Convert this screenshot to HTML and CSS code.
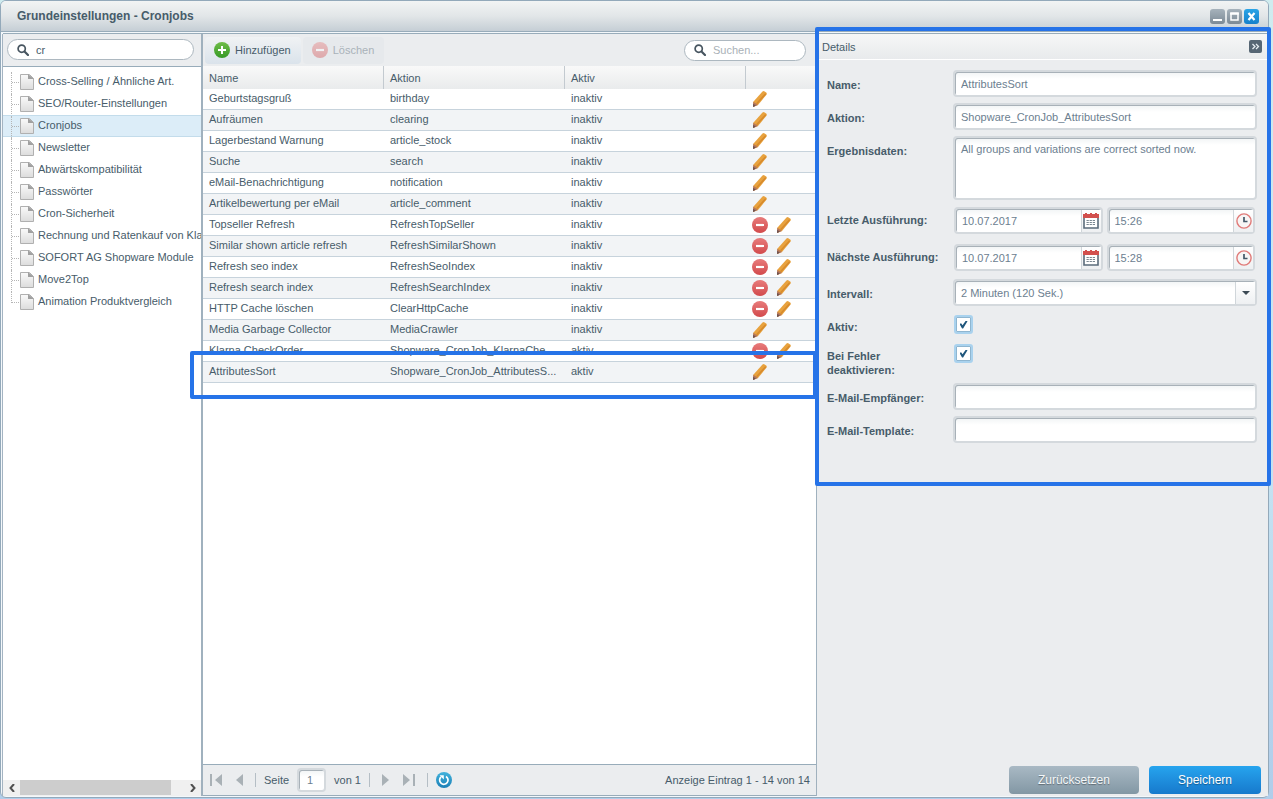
FILE: index.html
```html
<!DOCTYPE html>
<html lang="de">
<head>
<meta charset="utf-8">
<title>Grundeinstellungen - Cronjobs</title>
<link rel="stylesheet" href="styles.css">
</head>
<body>
<svg class="defs" aria-hidden="true">
  <defs>
    <linearGradient id="g-page" x1="0" y1="0" x2="0" y2="1"><stop offset="0" stop-color="#fafafa"/><stop offset="1" stop-color="#dcdcdc"/></linearGradient>
    <linearGradient id="g-red" x1="0" y1="0" x2="0" y2="1"><stop offset="0" stop-color="#e87c7c"/><stop offset="1" stop-color="#d24a4c"/></linearGradient>
    <linearGradient id="g-green" x1="0" y1="0" x2="0" y2="1"><stop offset="0" stop-color="#6fbd4a"/><stop offset="1" stop-color="#369a25"/></linearGradient>
    <linearGradient id="g-blue" x1="0" y1="0" x2="0" y2="1"><stop offset="0" stop-color="#43b3dc"/><stop offset="1" stop-color="#1b7fb6"/></linearGradient>
  </defs>
  <symbol id="page" viewBox="0 0 14 16"><path d="M.5.5h9l4 4v11H.5z" fill="url(#g-page)" stroke="#b0b0b0"/><path d="M8 0l6 5H8z" fill="#a0a0a0"/></symbol>
  <symbol id="search" viewBox="0 0 12 12"><circle cx="4.700" cy="4.700" r="3.600" fill="none" stroke="#475560" stroke-width="1.700"/><path d="M7.500 7.500L11 11" stroke="#475560" stroke-width="2.200" stroke-linecap="round"/></symbol>
  <symbol id="plus" viewBox="0 0 16 16"><circle cx="8" cy="8" r="8" fill="url(#g-green)"/><path d="M8 4v8M4 8h8" stroke="#fff" stroke-width="2"/></symbol>
  <symbol id="minus" viewBox="0 0 16 16"><circle cx="8" cy="8" r="8" fill="url(#g-red)"/><path d="M4 8h8" stroke="#fff" stroke-width="2.200"/></symbol>
  <symbol id="pencil" viewBox="0 0 16 16"><path d="M1 16l.3-5.200L10.500.6q1-1 2.100-.2l1.600 1.200q1.100.9.200 2.100L6 14z" fill="#e8a23e"/><path d="M4.600 12.800L13.700 2.700" stroke="#d68a2c" stroke-width="1.500"/><path d="M1 16l.3-5.200L6 14z" fill="#b5765a"/><path d="M1 16l.2-3.200 2.600 2z" fill="#6b5252"/></symbol>
  <symbol id="calendar" viewBox="0 0 16 16"><path d="M1 3v12h14V3" fill="#fff" stroke="#5b6c7b" stroke-width="1.600"/><path d="M0 1h2V0h2v1h3V0h2v1h3V0h2v1h2v4H0z" fill="#d2504e"/><path d="M3.500 7.500h9M3.500 9.500h9M3.500 11.500h9" stroke="#7a8791" stroke-width="1.200" stroke-dasharray="2.300 .8"/></symbol>
  <symbol id="clock" viewBox="0 0 16 16"><circle cx="8" cy="8" r="7.100" fill="#f7f5f5" stroke="#e07a78" stroke-width="1.400"/><path d="M8 4v4.500h3.500" fill="none" stroke="#435767" stroke-width="1.700"/></symbol>
  <symbol id="reload" viewBox="0 0 16 16"><circle cx="8" cy="8" r="8" fill="url(#g-blue)"/><path d="M10 4.500A4.200 4.200 0 1 1 5 5" fill="none" stroke="#fff" stroke-width="1.700"/><path d="M3.600 3.200h4.200v4.200z" fill="#fff"/></symbol>
  <symbol id="prev" viewBox="0 0 7 12"><path d="M7 0v12L0 6z" fill="#a9b1b6"/></symbol>
  <symbol id="next" viewBox="0 0 7 12"><path d="M0 0v12l7-6z" fill="#a9b1b6"/></symbol>
  <symbol id="first" viewBox="0 0 12 12"><path d="M12 0v12L5 6zM0 0h2v12H0z" fill="#a9b1b6"/></symbol>
  <symbol id="last" viewBox="0 0 12 12"><path d="M0 0v12l7-6zM10 0h2v12h-2z" fill="#a9b1b6"/></symbol>
</svg>

<div class="window">
  <header class="titlebar">
    <h1 class="title">Grundeinstellungen - Cronjobs</h1>
    <div class="tools">
      <button class="tool" aria-label="Minimieren"><svg viewBox="0 0 15 15"><path d="M3 11h9" stroke="#fff" stroke-width="2"/></svg></button>
      <button class="tool" aria-label="Maximieren"><svg viewBox="0 0 15 15"><path d="M4 4.500h7v6.500H4z" fill="none" stroke="#fff" stroke-width="1.500"/><path d="M3.200 4.500h8.600" stroke="#fff" stroke-width="2.400"/></svg></button>
      <button class="tool tool-close" aria-label="Schließen"><svg viewBox="0 0 15 15"><path d="M4.500 4l6 7M10.500 4l-6 7" stroke="#fff" stroke-width="2.200"/></svg></button>
    </div>
  </header>

  <div class="body">
    <nav class="sidebar">
      <div class="side-search">
        <label class="search"><svg class="i12"><use href="#search"/></svg><input type="text" value="cr" aria-label="Einstellungen durchsuchen"></label>
      </div>
      <ul class="tree">
        <li><svg class="page"><use href="#page"/></svg><span>Cross-Selling / Ähnliche Art.</span></li>
        <li><svg class="page"><use href="#page"/></svg><span>SEO/Router-Einstellungen</span></li>
        <li class="selected"><svg class="page"><use href="#page"/></svg><span>Cronjobs</span></li>
        <li><svg class="page"><use href="#page"/></svg><span>Newsletter</span></li>
        <li><svg class="page"><use href="#page"/></svg><span>Abwärtskompatibilität</span></li>
        <li><svg class="page"><use href="#page"/></svg><span>Passwörter</span></li>
        <li><svg class="page"><use href="#page"/></svg><span>Cron-Sicherheit</span></li>
        <li><svg class="page"><use href="#page"/></svg><span>Rechnung und Ratenkauf von Klarna</span></li>
        <li><svg class="page"><use href="#page"/></svg><span>SOFORT AG Shopware Module</span></li>
        <li><svg class="page"><use href="#page"/></svg><span>Move2Top</span></li>
        <li><svg class="page"><use href="#page"/></svg><span>Animation Produktvergleich</span></li>
      </ul>
      <div class="hscroll">
        <button aria-label="Nach links"><svg viewBox="0 0 6 8"><path d="M5 0L1.500 4 5 8" fill="none" stroke="#505050" stroke-width="2"/></svg></button>
        <div class="track"><div class="thumb"></div></div>
        <button aria-label="Nach rechts"><svg viewBox="0 0 6 8"><path d="M1 0l3.500 4L1 8" fill="none" stroke="#505050" stroke-width="2"/></svg></button>
      </div>
    </nav>

    <main class="center">
      <div class="toolbar">
        <button class="action"><svg class="i16"><use href="#plus"/></svg>Hinzufügen</button>
        <button class="action disabled" disabled><svg class="i16"><use href="#minus"/></svg>Löschen</button>
        <label class="search search-grid"><svg class="i12"><use href="#search"/></svg><input type="text" placeholder="Suchen..." aria-label="Suchen"></label>
      </div>
      <div class="gridwrap">
        <div class="gridbox">
        <table class="grid">
          <colgroup><col class="c"><col class="c"><col class="c"><col></colgroup>
          <thead><tr><th>Name</th><th>Aktion</th><th>Aktiv</th><th aria-label="Aktionen"></th></tr></thead>
          <tbody>
            <tr><td>Geburtstagsgruß</td><td>birthday</td><td>inaktiv</td><td><div class="icons"><svg class="i16"><use href="#pencil"/></svg></div></td></tr>
            <tr><td>Aufräumen</td><td>clearing</td><td>inaktiv</td><td><div class="icons"><svg class="i16"><use href="#pencil"/></svg></div></td></tr>
            <tr><td>Lagerbestand Warnung</td><td>article_stock</td><td>inaktiv</td><td><div class="icons"><svg class="i16"><use href="#pencil"/></svg></div></td></tr>
            <tr><td>Suche</td><td>search</td><td>inaktiv</td><td><div class="icons"><svg class="i16"><use href="#pencil"/></svg></div></td></tr>
            <tr><td>eMail-Benachrichtigung</td><td>notification</td><td>inaktiv</td><td><div class="icons"><svg class="i16"><use href="#pencil"/></svg></div></td></tr>
            <tr><td>Artikelbewertung per eMail</td><td>article_comment</td><td>inaktiv</td><td><div class="icons"><svg class="i16"><use href="#pencil"/></svg></div></td></tr>
            <tr><td>Topseller Refresh</td><td>RefreshTopSeller</td><td>inaktiv</td><td><div class="icons"><svg class="i16"><use href="#minus"/></svg><svg class="i16"><use href="#pencil"/></svg></div></td></tr>
            <tr><td>Similar shown article refresh</td><td>RefreshSimilarShown</td><td>inaktiv</td><td><div class="icons"><svg class="i16"><use href="#minus"/></svg><svg class="i16"><use href="#pencil"/></svg></div></td></tr>
            <tr><td>Refresh seo index</td><td>RefreshSeoIndex</td><td>inaktiv</td><td><div class="icons"><svg class="i16"><use href="#minus"/></svg><svg class="i16"><use href="#pencil"/></svg></div></td></tr>
            <tr><td>Refresh search index</td><td>RefreshSearchIndex</td><td>inaktiv</td><td><div class="icons"><svg class="i16"><use href="#minus"/></svg><svg class="i16"><use href="#pencil"/></svg></div></td></tr>
            <tr><td>HTTP Cache löschen</td><td>ClearHttpCache</td><td>inaktiv</td><td><div class="icons"><svg class="i16"><use href="#minus"/></svg><svg class="i16"><use href="#pencil"/></svg></div></td></tr>
            <tr><td>Media Garbage Collector</td><td>MediaCrawler</td><td>inaktiv</td><td><div class="icons"><svg class="i16"><use href="#pencil"/></svg></div></td></tr>
            <tr><td>Klarna CheckOrder</td><td>Shopware_CronJob_KlarnaChe...</td><td>aktiv</td><td><div class="icons"><svg class="i16"><use href="#minus"/></svg><svg class="i16"><use href="#pencil"/></svg></div></td></tr>
            <tr><td>AttributesSort</td><td>Shopware_CronJob_AttributesS...</td><td>aktiv</td><td><div class="icons"><svg class="i16"><use href="#pencil"/></svg></div></td></tr>
          </tbody>
        </table>
        <div class="mark mark-row"></div>
        </div>
      </div>
      <footer class="paging">
        <button aria-label="Erste Seite"><svg class="i12"><use href="#first"/></svg></button>
        <button aria-label="Vorherige Seite"><svg class="arrow"><use href="#prev"/></svg></button>
        <span class="sep"></span>
        <label for="pageno">Seite</label>
        <input id="pageno" class="field pageno" type="text" value="1">
        <span class="of">von 1</span>
        <span class="sep"></span>
        <button aria-label="Nächste Seite"><svg class="arrow"><use href="#next"/></svg></button>
        <button aria-label="Letzte Seite"><svg class="i12"><use href="#last"/></svg></button>
        <span class="sep"></span>
        <button aria-label="Aktualisieren"><svg class="i16"><use href="#reload"/></svg></button>
        <span class="count">Anzeige Eintrag 1 - 14 von 14</span>
      </footer>
    </main>

    <aside class="details">
      <div class="detailbox">
        <div class="details-head"><h2>Details</h2><button class="collapse" aria-label="Einklappen"><svg viewBox="0 0 13 13"><path d="M3.500 4L6 6.500 3.500 9M7 4l2.500 2.500L7 9" fill="none" stroke="#e6edf2" stroke-width="1.300"/></svg></button></div>
        <form class="form">
          <div class="row"><label for="name">Name:</label><input id="name" class="field" type="text" value="AttributesSort"></div>
          <div class="row"><label for="act">Aktion:</label><input id="act" class="field" type="text" value="Shopware_CronJob_AttributesSort"></div>
          <div class="row"><label for="data">Ergebnisdaten:</label><textarea id="data" class="field area">All groups and variations are correct sorted now.</textarea></div>
          <div class="row dates"><label for="last-run">Letzte Ausführung:</label>
            <div class="pair">
              <div class="field combo"><input id="last-run" type="text" value="10.07.2017"><button type="button" aria-label="Datum wählen"><svg class="i16"><use href="#calendar"/></svg></button></div>
              <div class="field combo"><input type="text" value="15:26" aria-label="Letzte Uhrzeit"><button type="button" aria-label="Uhrzeit wählen"><svg class="i16"><use href="#clock"/></svg></button></div>
            </div></div>
          <div class="row dates"><label for="next-run">Nächste Ausführung:</label>
            <div class="pair">
              <div class="field combo"><input id="next-run" type="text" value="10.07.2017"><button type="button" aria-label="Datum wählen"><svg class="i16"><use href="#calendar"/></svg></button></div>
              <div class="field combo"><input type="text" value="15:28" aria-label="Nächste Uhrzeit"><button type="button" aria-label="Uhrzeit wählen"><svg class="i16"><use href="#clock"/></svg></button></div>
            </div></div>
          <div class="row interval"><label for="interval">Intervall:</label>
            <div class="field combo"><select id="interval"><option>2 Minuten (120 Sek.)</option></select><span class="trigger"><svg viewBox="0 0 8 4"><path d="M0 0h8L4 4z" fill="#3c4a55"/></svg></span></div></div>
          <div class="row check"><label for="active">Aktiv:</label><input id="active" type="checkbox" checked></div>
          <div class="row check"><label for="onerror">Bei Fehler deaktivieren:</label><input id="onerror" type="checkbox" checked></div>
          <div class="row"><label for="mailto">E-Mail-Empfänger:</label><input id="mailto" class="field" type="text"></div>
          <div class="row"><label for="mailtpl">E-Mail-Template:</label><input id="mailtpl" class="field" type="text"></div>
        </form>
        <div class="mark mark-details"></div>
      </div>
      <div class="buttons">
        <button class="btn">Zurücksetzen</button>
        <button class="btn primary">Speichern</button>
      </div>
    </aside>
  </div>
</div>
</body>
</html>
```
FILE: styles.css
```css
* { box-sizing: border-box; }
body {
  margin: 0;
  height: 100vh;
  overflow: hidden;
  background: linear-gradient(#cfecef, #c4e2f2 60%, #b0cdea);
  font: 11px/14px "Liberation Sans", Arial, sans-serif;
  color: #475c6a;
}
button, input, select, textarea { font: inherit; color: inherit; margin: 0; }
button { border: 0; padding: 0; background: none; }
button svg { display: block; }
.defs { position: absolute; width: 0; height: 0; }
.i12 { width: 12px; height: 12px; flex: none; }
.i16 { width: 16px; height: 16px; flex: none; display: block; }

.window {
  display: flex;
  flex-direction: column;
  height: calc(100vh - 1px);
  margin-right: 4px;
  border: 1px solid #93a9ba;
  border-radius: 6px;
  background: #f4f8fb;
}
.titlebar {
  display: flex;
  align-items: center;
  justify-content: space-between;
  height: 31px;
  padding: 0 9px 0 16px;
  border-radius: 5px 5px 0 0;
  border-bottom: 1px solid #98acba;
  background: linear-gradient(#f2f4f4, #e2e6e8 50%, #c5ced5);
}
.title { margin: 0; font-size: 12px; line-height: 16px; font-weight: bold; }
.tools { display: flex; gap: 2px; }
.tool { width: 15px; height: 15px; border-radius: 3px; background: linear-gradient(#a6b2bb, #7c8a96); }
.tool-close { background: linear-gradient(#2ba4e6, #1580cb); }

.body {
  display: grid;
  grid-template-columns: 200px minmax(0, 1fr) 451px;
  flex: 1;
  min-height: 0;
  margin: 1px 0 1px 2px;
  border-top: 1px solid #98acba;
  background: #ebedef;
}

.sidebar { display: flex; flex-direction: column; min-width: 0; border-left: 1px solid #a4b4c2; border-right: 2px solid #a0b1be; margin-left: -1px; background: #fff; }
.side-search { padding: 5px 7px 5px 4px; height: 33px; border-bottom: 1px solid #98acba; background: #ebedef; }
.search {
  display: flex;
  align-items: center;
  gap: 7px;
  height: 21px;
  padding: 0 8px 0 9px;
  border: 1px solid #adb8c0;
  border-radius: 11px;
  background: #fff;
}
.search input { flex: 1; min-width: 0; padding: 0; border: 0; outline: 0; background: none; }
.search input::placeholder { color: #a9b1b7; opacity: 1; }
.tree { flex: 1; margin: 0; padding: 4px 0 0; list-style: none; overflow: hidden; }
.tree li {
  position: relative;
  display: flex;
  align-items: center;
  gap: 4px;
  height: 22px;
  padding-left: 17px;
  border: 1px solid transparent;
  border-width: 1px 0;
  white-space: nowrap;
}
.tree span { padding-bottom: 2px; }
.tree li::before { content: ""; position: absolute; left: 8px; top: 0; bottom: -2px; border-left: 1px dotted #b5b5b5; }
.tree li:last-child::before { bottom: 9px; }
.tree li::after { content: ""; position: absolute; left: 9px; top: 10px; width: 7px; border-top: 1px dotted #b5b5b5; }
.tree .selected { background: #dcedf8; border-color: #c3dceb; }
.page { width: 14px; height: 16px; flex: none; }
.hscroll { display: flex; height: 16px; background: #f0f0f0; }
.hscroll button { width: 17px; display: grid; place-items: center; }
.hscroll svg { width: 6px; height: 8px; }
.track { flex: 1; }
.thumb { width: 92%; height: 15px; background: #cdcdcd; }

.center { display: flex; flex-direction: column; min-width: 0; border-right: 1px solid #a0b1be; }
.toolbar { display: flex; align-items: center; gap: 2px; height: 32px; padding: 0 10px 0 2px; }
.action {
  display: flex;
  align-items: center;
  gap: 5px;
  height: 27px;
  padding: 0 10px 0 9px;
  border-radius: 4px;
  background: linear-gradient(#f0f2f4, #dae3eb);
}
.action.disabled { color: #a9b2b9; background: #e6e9ec; }
.disabled svg { opacity: .4; }
.search-grid { width: 122px; margin-left: auto; }
.gridwrap { flex: 1; min-height: 0; background: #fff; }
.gridbox { position: relative; }
.grid { width: 100%; table-layout: fixed; border-collapse: separate; border-spacing: 0; }
.c { width: 181px; }
.grid th { height: 23px; padding: 0 6px; border-right: 1px solid #c3cad0; background: linear-gradient(#f9f9f9, #e9ebec); font-weight: normal; text-align: left; }
.grid th:last-child { border-right: 0; }
.grid td { height: 21px; padding: 0 6px 3px; border-bottom: 1px solid #c7d3dc; white-space: nowrap; overflow: hidden; text-overflow: ellipsis; }
.grid td:last-child { padding-bottom: 1px; }
.grid tbody tr:nth-child(even) td { background: #f2f4f6; }
.icons { display: flex; gap: 8px; height: 16px; }
.paging { display: flex; align-items: center; height: 32px; padding: 0 6px 0 7px; border-top: 1px solid #98acba; border-bottom: 1px solid #98acba; }
.paging button { margin-right: 14px; }
.paging button:has(+ .sep) { margin-right: 12px; }
.arrow { width: 7px; height: 12px; }
.sep { width: 1px; height: 14px; margin-right: 8px; background: #b5bec5; }
.field.pageno { width: 29px; height: 24px; margin: 0 8px; padding: 0 8px; }
.of { margin-right: 8px; }
.of + .sep { margin-right: 12px; }
.count { margin-left: auto; }

.details { display: flex; flex-direction: column; justify-content: space-between; min-width: 0; }
.detailbox { position: relative; padding-bottom: 43px; }
.details-head { display: flex; align-items: center; justify-content: space-between; height: 26px; padding: 0 6px 0 5px; border-bottom: 1px solid #fff; background: linear-gradient(#f6f7f7, #e8eaec); }
.details-head h2 { margin: 0; font: inherit; }
.collapse { width: 13px; height: 13px; border-radius: 2px; background: #566674; }
.form { display: flex; flex-direction: column; gap: 6px; padding: 10px 11px 0 10px; }
.row { display: grid; grid-template-columns: 126px minmax(0, 1fr); align-items: start; }
.row > label { padding-top: 8px; font-weight: bold; }
.field {
  width: 100%;
  height: 27px;
  padding: 0 6px;
  border: 2px solid #d4d9dd;
  border-radius: 4px;
  outline: 0;
  background: linear-gradient(#f1f4f5, #fff 7px);
  box-shadow: inset 1px 1px 0 #a8b1b8;
  color: #6c8090;
}
.area { display: block; height: 64px; padding: 4px 6px; resize: none; }
.pair { display: grid; grid-template-columns: repeat(2, minmax(0, 1fr)); gap: 4px; padding: 0 2px 0 1px; }
.combo { display: flex; padding: 1px 0 0 1px; }
.combo input, .combo select { flex: 1; min-width: 0; padding: 0 5px; border: 0; outline: 0; background: none; appearance: none; }
.combo button, .trigger { display: grid; place-items: center; flex: none; width: 20px; border-left: 1px solid #d0d6da; background: linear-gradient(#fff, #eef0f2); }
.trigger svg { width: 8px; height: 4px; }
.dates { padding-bottom: 4px; }
.dates:nth-child(4) { padding-top: 1px; }
.dates > label { padding-top: 6px; }
.interval { margin-top: -2px; }
.check { min-height: 23px; padding-top: 3px; }
.check > label { padding-top: 5px; padding-right: 20px; }
.check input {
  appearance: none;
  display: grid;
  place-items: center;
  width: 19px;
  height: 19px;
  margin: 0 0 0 1px;
  border: 2px solid #a9d2ee;
  border-radius: 3px;
  background: #fff;
  box-shadow: inset 0 0 0 1px #8fb6d0;
}
.check input:checked::before {
  content: "";
  width: 8px;
  height: 8px;
  background: #1f567c;
  clip-path: polygon(0 45%, 20% 35%, 38% 60%, 80% 0, 100% 10%, 45% 100%, 32% 100%);
}
.buttons { display: flex; justify-content: flex-end; gap: 10px; padding: 0 7px 2px; }
.btn {
  height: 28px;
  padding: 0 29px;
  border-radius: 4px;
  background: linear-gradient(#a9b9c4, #8297a4);
  color: #f4f7f9;
  font-size: 12px;
  text-shadow: 0 1px 1px rgba(0, 0, 0, .35);
}
.btn.primary { background: linear-gradient(#26a4ee, #1779cc); color: #fff; }

.mark { position: absolute; border: 4px solid #2673e8; border-radius: 2px; pointer-events: none; z-index: 2; }
.mark-row { left: -13px; right: -1px; bottom: -16px; height: 48px; }
.mark-details { inset: -7px -3px 0 -2px; }
```
